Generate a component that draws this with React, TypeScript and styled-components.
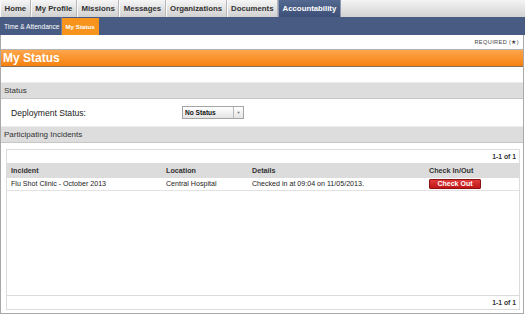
import styled, { createGlobalStyle } from "styled-components";

const GlobalStyle = createGlobalStyle`
  html, body {
    margin: 0;
    padding: 0;
    background: #ffffff;
  }
  body {
    font-family: "Liberation Sans", Arial, sans-serif;
    color: #222;
  }
`;

const Page = styled.div`
  width: 525px;
  height: 316px;
  display: flex;
  flex-direction: column;
  overflow: hidden;
`;

const TopNav = styled.div`
  display: flex;
  height: 17px;
  background: linear-gradient(#f4f4f4, #d2d2d2);
`;

const Tab = styled.div<{ $active?: boolean }>`
  display: flex;
  align-items: center;
  padding: 0 3.5px;
  font-size: 7.8px;
  font-weight: 700;
  color: ${(p) => (p.$active ? "#ffffff" : "#333333")};
  background: ${(p) =>
    p.$active ? "linear-gradient(#54698f, #3c4f78)" : "linear-gradient(#f6f6f6, #d0d0d0)"};
  border-right: 1px solid ${(p) => (p.$active ? "#8a98b4" : "#b8b8b8")};
  border-left: 1px solid ${(p) => (p.$active ? "#8a98b4" : "#fafafa")};
  white-space: nowrap;
`;

const SubNav = styled.div`
  display: flex;
  height: 18px;
  background: #485b83;
  padding-left: 2px;
`;

const SubTab = styled.div<{ $active?: boolean }>`
  display: flex;
  align-items: center;
  padding: 0 ${(p) => (p.$active ? "3px" : "2px")};
  font-size: ${(p) => (p.$active ? "6.2px" : "6.6px")};
  font-weight: ${(p) => (p.$active ? 700 : 400)};
  color: #ffffff;
  background: ${(p) => (p.$active ? "#f7941e" : "transparent")};
  margin-top: ${(p) => (p.$active ? "1px" : "0")};
  border-right: 1px solid ${(p) => (p.$active ? "#f7941e" : "#6a7ca0")};
  white-space: nowrap;
`;

const Content = styled.div`
  flex: 1;
  display: flex;
  flex-direction: column;
  border-left: 1px solid #a8a8a8;
  border-right: 1px solid #a8a8a8;
  border-bottom: 1px solid #a8a8a8;
  margin-right: 1px;
  margin-bottom: 2px;
`;

const Required = styled.div`
  height: 14px;
  display: flex;
  align-items: center;
  justify-content: flex-end;
  padding-right: 4px;
  font-size: 5.6px;
  letter-spacing: 0.4px;
  color: #444;
`;

const PageHeader = styled.div`
  height: 16px;
  display: flex;
  align-items: center;
  padding-left: 2px;
  border-top: 1px solid #b4b4b4;
  border-bottom: 1px solid #8b6e55;
  background: linear-gradient(#ffa64c, #f5810f);
  color: #ffffff;
  font-size: 12px;
  font-weight: 700;
`;

const SectionBar = styled.div<{ $top: number }>`
  margin-top: ${(p) => p.$top}px;
  height: 15px;
  display: flex;
  align-items: center;
  padding-left: 3px;
  background: #dddddd;
  border-top: 1px solid #ececec;
  border-bottom: 1px solid #c6c6c6;
  font-size: 8px;
  color: #333;
`;

const FieldRow = styled.div`
  height: 27px;
  display: flex;
  align-items: center;
  padding-left: 10px;
`;

const FieldLabel = styled.div`
  width: 171px;
  font-size: 8.6px;
  color: #222;
`;

const Select = styled.div`
  width: 60px;
  height: 11px;
  display: flex;
  border: 1px solid #a4a4a4;
  background: linear-gradient(#ffffff, #e4e4e4);
`;

const SelectText = styled.div`
  flex: 1;
  display: flex;
  align-items: center;
  padding-left: 2px;
  font-size: 6.6px;
  font-weight: 700;
  color: #111;
`;

const SelectArrow = styled.div`
  width: 9px;
  display: flex;
  align-items: center;
  justify-content: center;
  border-left: 1px solid #b8b8b8;
  font-size: 4px;
  color: #777;
`;

const Panel = styled.div`
  margin: 6px 3px 3px 5px;
  flex: 1;
  display: flex;
  flex-direction: column;
  border: 1px solid #dcdcdc;
`;

const Pager = styled.div<{ $bottom?: boolean }>`
  height: 13px;
  display: flex;
  align-items: center;
  justify-content: flex-end;
  padding-right: 3px;
  font-size: 6.8px;
  font-weight: 700;
  color: #333;
  border-top: ${(p) => (p.$bottom ? "1px solid #dcdcdc" : "0")};
`;

const TableArea = styled.div`
  flex: 1;
`;

const Grid = styled.div`
  display: grid;
  grid-template-columns: 155px 86px 177px 1fr;
`;

const HeadCell = styled.div`
  height: 15px;
  display: flex;
  align-items: center;
  padding-left: 4px;
  background: #dcdcdc;
  font-size: 7.2px;
  font-weight: 700;
  color: #333;
`;

const Cell = styled.div`
  height: 12px;
  display: flex;
  align-items: center;
  padding-left: 4px;
  font-size: 7.1px;
  color: #222;
  border-bottom: 1px solid #e2e2e2;
`;

const CheckOut = styled.button`
  width: 52px;
  height: 10px;
  padding: 0;
  margin: 0;
  border: 1px solid #8f1212;
  border-radius: 1px;
  background: linear-gradient(#e03a3a, #c01818);
  color: #ffffff;
  font-family: "Liberation Sans", Arial, sans-serif;
  font-size: 7px;
  font-weight: 700;
  line-height: 8px;
`;

const tabs = ["Home", "My Profile", "Missions", "Messages", "Organizations", "Documents"];

export default function App() {
  return (
    <Page>
      <GlobalStyle />
      <TopNav>
        {tabs.map((t) => (
          <Tab key={t}>{t}</Tab>
        ))}
        <Tab $active>Accountability</Tab>
      </TopNav>
      <SubNav>
        <SubTab>Time &amp; Attendance</SubTab>
        <SubTab $active>My Status</SubTab>
      </SubNav>
      <Content>
        <Required>REQUIRED (★)</Required>
        <PageHeader>My Status</PageHeader>
        <SectionBar $top={15}>Status</SectionBar>
        <FieldRow>
          <FieldLabel>Deployment Status:</FieldLabel>
          <Select>
            <SelectText>No Status</SelectText>
            <SelectArrow>▼</SelectArrow>
          </Select>
        </FieldRow>
        <SectionBar $top={0}>Participating Incidents</SectionBar>
        <Panel>
          <Pager>1-1 of 1</Pager>
          <TableArea>
            <Grid>
              <HeadCell>Incident</HeadCell>
              <HeadCell>Location</HeadCell>
              <HeadCell>Details</HeadCell>
              <HeadCell>Check In/Out</HeadCell>
              <Cell>Flu Shot Clinic - October 2013</Cell>
              <Cell>Central Hospital</Cell>
              <Cell>Checked in at 09:04 on 11/05/2013.</Cell>
              <Cell>
                <CheckOut>Check Out</CheckOut>
              </Cell>
            </Grid>
          </TableArea>
          <Pager $bottom>1-1 of 1</Pager>
        </Panel>
      </Content>
    </Page>
  );
}
